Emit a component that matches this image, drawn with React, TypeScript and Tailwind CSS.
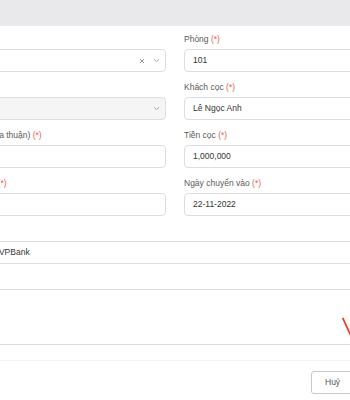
import React from "react";

const Req = () => <span className="text-[#ee5a52]">(*)</span>;

function Label({ children }: { children: React.ReactNode }) {
  return (
    <div className="h-[12px] leading-[12px] mb-[4px] text-[8.5px] text-[#5a5a5a] whitespace-nowrap">
      {children}
    </div>
  );
}

function Chevron() {
  return (
    <svg width="7" height="5" viewBox="0 0 7 5" className="block">
      <path d="M1 1.2 L3.5 3.6 L6 1.2" fill="none" stroke="#9a9a9a" strokeWidth="0.9" />
    </svg>
  );
}

function Clear() {
  return (
    <svg width="6" height="6" viewBox="0 0 6 6" className="block">
      <path d="M1 1 L5 5 M5 1 L1 5" fill="none" stroke="#8a8a8a" strokeWidth="0.9" />
    </svg>
  );
}

function Input({ value, bg = "bg-white" }: { value?: string; bg?: string }) {
  return (
    <div
      className={`h-[23px] rounded-[4px] border border-[#dedde2] ${bg} flex items-center pl-[8px] text-[8.5px] text-[#333] whitespace-nowrap overflow-hidden`}
    >
      {value}
    </div>
  );
}

function Select({ clear, disabled }: { clear?: boolean; disabled?: boolean }) {
  return (
    <div
      className={`h-[23px] rounded-[4px] border border-[#dedde2] ${
        disabled ? "bg-[#f5f5f6]" : "bg-white"
      } flex items-center justify-end gap-[8px] pr-[5px]`}
    >
      {clear && <Clear />}
      <Chevron />
    </div>
  );
}

function Field({ label, children }: { label: React.ReactNode; children: React.ReactNode }) {
  return (
    <div className="mb-[9px]">
      <Label>{label}</Label>
      {children}
    </div>
  );
}

export default function App() {
  return (
    <div
      className="relative w-[350px] h-[400px] overflow-hidden bg-white"
      style={{ fontFamily: '"Liberation Sans", Arial, sans-serif' }}
    >
      <div className="h-[26px] bg-[#e9e9eb]" />
      <div className="ml-[-50px] w-[450px] pt-[7px] pb-[15px]">
        <div className="grid grid-cols-2 gap-x-[18px]">
          <Field label={<>Toà nhà <Req /></>}>
            <Select clear />
          </Field>
          <Field label={<>Phòng <Req /></>}>
            <Input value="101" />
          </Field>
          <Field label={<>Loại <Req /></>}>
            <Select disabled />
          </Field>
          <Field label={<>Khách cọc <Req /></>}>
            <Input value="Lê Ngọc Anh" />
          </Field>
          <Field label={<>Giá thuê (thoa thuận) <Req /></>}>
            <Input />
          </Field>
          <Field label={<>Tiền cọc <Req /></>}>
            <Input value="1,000,000" />
          </Field>
          <Field label={<>Ngày ký HĐ <Req /></>}>
            <Input />
          </Field>
          <Field label={<>Ngày chuyển vào <Req /></>}>
            <Input value="22-11-2022" />
          </Field>
        </div>
        <Field label="Thanh toán">
          <div className="h-[23px] border-y border-[#e0dfe6] flex items-center pl-[5px] text-[8.5px] text-[#333] whitespace-nowrap">
            Ngân hàng VPBank
          </div>
        </Field>
        <div>
          <Label>Ghi chú</Label>
          <div className="h-[56px] border-y border-[#dcdbe2]" />
        </div>
      </div>
      <div className="ml-[-50px] w-[450px] border-t border-[#f4f4f5] pt-[10px] flex justify-start pl-[361px] gap-[8px]">
        <button className="h-[23px] w-[50px] rounded-[3px] border border-[#c8c8cc] bg-white text-[8.5px] text-[#555] flex items-center justify-start pl-[13px]">
          Huỷ
        </button>
      </div>
      <svg className="absolute left-[340px] top-[314px]" width="12" height="24" viewBox="0 0 12 24">
        <path d="M3 4.5 L10.5 21" stroke="#f2381c" strokeWidth="1.8" strokeLinecap="round" fill="none" />
      </svg>
    </div>
  );
}
